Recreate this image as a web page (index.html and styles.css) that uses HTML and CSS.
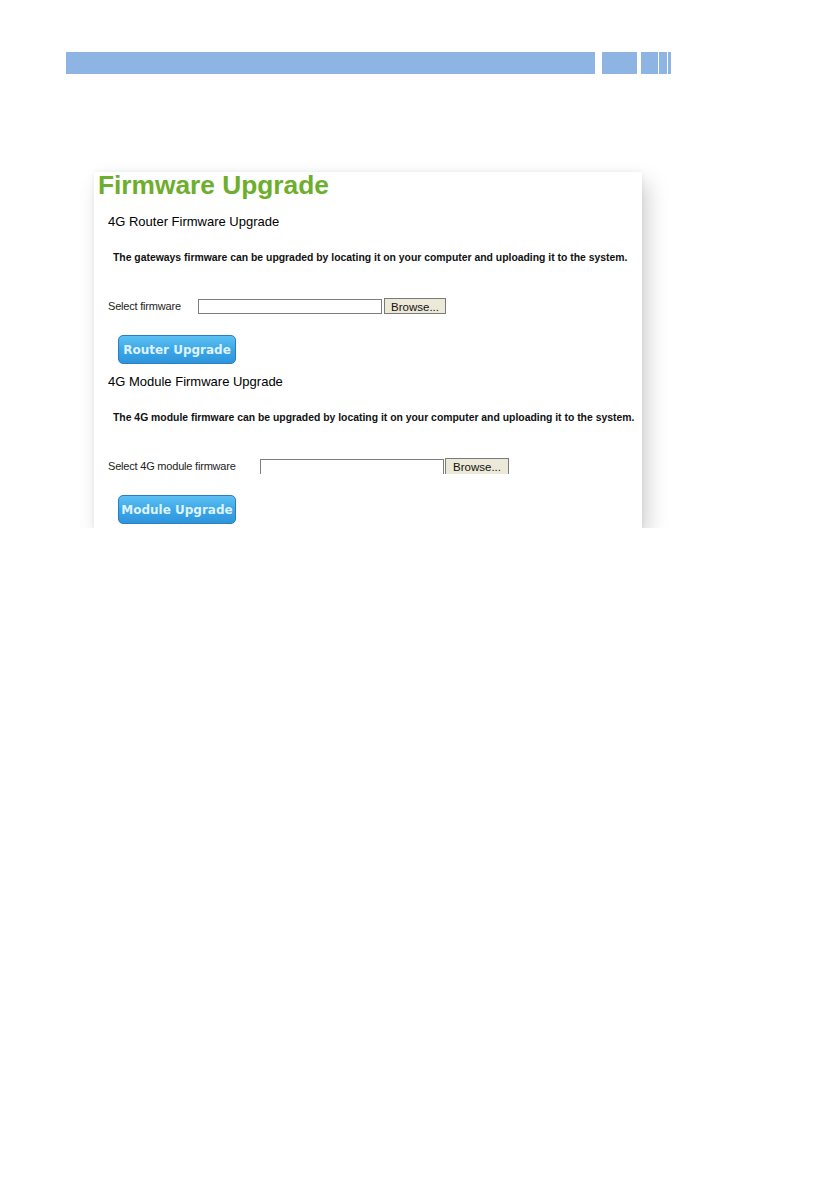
FILE: index.html
```html
<!DOCTYPE html>
<html lang="en">
  <head>
    <meta charset="UTF-8" />
    <meta name="viewport" content="width=device-width, initial-scale=1.0" />
    <title>Firmware Upgrade</title>
    <link rel="stylesheet" href="styles.css">
  </head>
  <body>
    <!-- page header strip -->
    <div class="page-top">
      <span class="strip strip-main"></span>
      <span class="strip strip-a"></span>
      <span class="strip strip-b"></span>
      <span class="strip strip-c"></span>
      <span class="strip strip-d"></span>
    </div>

    <div class="panel">
      <h1 class="panel-title">Firmware Upgrade</h1>

      <h2 class="section-title">4G Router Firmware Upgrade</h2>
      <p class="section-text">The gateways firmware can be upgraded by locating it on your computer and uploading it to the system.</p>
      <div class="file-row">
        <label class="file-label">Select firmware</label>
        <input class="file-input" type="text" />
        <button class="browse-button">Browse...</button>
      </div>
      <button class="upgrade-button">Router Upgrade</button>

      <h2 class="section-title second">4G Module Firmware Upgrade</h2>
      <p class="section-text">The 4G module firmware can be upgraded by locating it on your computer and uploading it to the system.</p>
      <div class="file-row">
        <label class="file-label wide">Select 4G module firmware</label>
        <input class="file-input cut" type="text" />
        <button class="browse-button cut wide">Browse...</button>
      </div>
      <button class="upgrade-button">Module Upgrade</button>
    </div>
  </body>
</html>
```

FILE: styles.css
```css
/* Base */
* {
  box-sizing: border-box;
  margin: 0;
  padding: 0;
}
body {
  font-family: "Liberation Sans", Arial, sans-serif;
  background: #fff;
  color: #111;
}

/* Header strip */
.page-top {
  display: flex;
  height: 22px;
  margin: 52px 0 0 66px;
}
.strip {
  display: block;
  height: 100%;
  background: #8eb4e3;
}
.strip-main {
  width: 529px;
}
.strip-a {
  width: 35px;
  margin-left: 7px;
}
.strip-b {
  width: 17px;
  margin-left: 4px;
}
.strip-c {
  width: 8px;
  margin-left: 1px;
}
.strip-d {
  width: 3px;
  margin-left: 1px;
}

/* Panel */
.panel {
  width: 548px;
  height: 356px;
  margin: 98px 0 0 94px;
  padding-left: 14px;
  background: #fff;
  box-shadow: 6px 10px 20px rgba(0, 0, 0, 0.18), 0 0 5px rgba(0, 0, 0, 0.06);
}
.panel-title {
  margin-left: -10px;
  font-size: 26.3px;
  line-height: 26px;
  font-weight: bold;
  color: #6dae2c;
}
.section-title {
  margin-top: 16px;
  font-size: 13px;
  line-height: 16px;
  font-weight: normal;
  color: #000;
}
.section-title.second {
  margin-top: 10px;
}
.section-text {
  margin-top: 21px;
  padding-left: 5px;
  font-size: 10.4px;
  line-height: 14px;
  font-weight: bold;
  color: #111;
}

/* File row */
.file-row {
  display: flex;
  align-items: center;
  height: 16px;
  margin-top: 33px;
}
.file-label {
  width: 90px;
  font-size: 11px;
  line-height: 16px;
  color: #222;
  letter-spacing: -0.2px;
}
.file-label.wide {
  width: 152px;
}
.file-input {
  width: 184px;
  height: 15px;
  border: 1px solid #7d7d7d;
  background: #fff;
}
.browse-button {
  width: 62px;
  height: 16px;
  margin-left: 2px;
  padding-top: 1px;
  border: 1px solid #7a7a7a;
  background: #ece9d8;
  font-family: "Liberation Sans", Arial, sans-serif;
  font-size: 11.5px;
  line-height: 14px;
  color: #111;
}
.browse-button.wide {
  width: 64px;
  margin-left: 1px;
}
.cut {
  border-bottom: 0;
}

/* Blue upgrade buttons */
.upgrade-button {
  display: block;
  width: 118px;
  height: 29px;
  margin: 21px 0 0 10px;
  border: 1px solid #2b7dbd;
  border-radius: 5px;
  background: linear-gradient(#5cc0f3, #3aa5e6 55%, #2f95dc);
  font-family: "DejaVu Sans", Verdana, sans-serif;
  font-size: 12px;
  font-weight: bold;
  color: #dff3ff;
}
```
